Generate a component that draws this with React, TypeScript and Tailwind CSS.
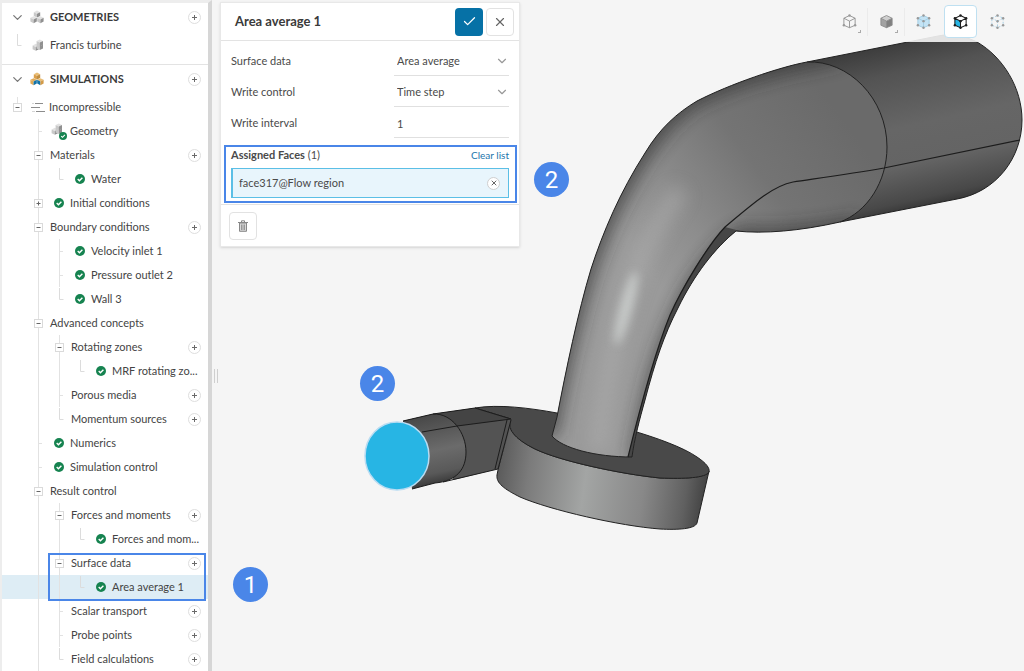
import React, { useState } from 'react';
import { Check, ChevronDown, X } from 'lucide-react';

type Guide = 'none' | 'line' | 'tee' | 'elbow' | 'minusLine' | 'plusLine' | 'minusTop';
type IconKind = 'check' | 'flow' | 'partDone';

interface TreeItem {
  label: string;
  guides: Guide[];
  icon?: IconKind;
  add?: boolean;
  selected?: boolean;
}

const itemsBefore: TreeItem[] = [
  { label: 'Incompressible', guides: ['minusTop'], icon: 'flow' },
  { label: 'Geometry', guides: ['none', 'tee'], icon: 'partDone' },
  { label: 'Materials', guides: ['none', 'minusLine'], add: true },
  { label: 'Water', guides: ['none', 'line', 'elbow'], icon: 'check' },
  { label: 'Initial conditions', guides: ['none', 'plusLine'], icon: 'check' },
  { label: 'Boundary conditions', guides: ['none', 'minusLine'], add: true },
  { label: 'Velocity inlet 1', guides: ['none', 'line', 'tee'], icon: 'check' },
  { label: 'Pressure outlet 2', guides: ['none', 'line', 'tee'], icon: 'check' },
  { label: 'Wall 3', guides: ['none', 'line', 'elbow'], icon: 'check' },
  { label: 'Advanced concepts', guides: ['none', 'minusLine'] },
  { label: 'Rotating zones', guides: ['none', 'line', 'minusLine'], add: true },
  { label: 'MRF rotating zo...', guides: ['none', 'line', 'line', 'elbow'], icon: 'check' },
  { label: 'Porous media', guides: ['none', 'line', 'tee'], add: true },
  { label: 'Momentum sources', guides: ['none', 'line', 'elbow'], add: true },
  { label: 'Numerics', guides: ['none', 'tee'], icon: 'check' },
  { label: 'Simulation control', guides: ['none', 'tee'], icon: 'check' },
  { label: 'Result control', guides: ['none', 'minusLine'] },
  { label: 'Forces and moments', guides: ['none', 'line', 'minusLine'], add: true },
  { label: 'Forces and mom...', guides: ['none', 'line', 'line', 'elbow'], icon: 'check' },
];

const itemsMarked: TreeItem[] = [
  { label: 'Surface data', guides: ['none', 'line', 'minusLine'], add: true },
  { label: 'Area average 1', guides: ['none', 'line', 'line', 'elbow'], icon: 'check', selected: true },
];

const itemsAfter: TreeItem[] = [
  { label: 'Scalar transport', guides: ['none', 'line', 'tee'], add: true },
  { label: 'Probe points', guides: ['none', 'line', 'tee'], add: true },
  { label: 'Field calculations', guides: ['none', 'line', 'elbow'], add: true },
];

const GuideCell: React.FC<{ kind: Guide }> = ({ kind }) => {
  const box = kind === 'minusLine' || kind === 'plusLine' || kind === 'minusTop';
  const full = kind === 'line' || kind === 'tee' || kind === 'minusLine' || kind === 'plusLine';
  return (
    <svg width="21" height="24" viewBox="0 0 21 24" className="shrink-0" fill="none" aria-hidden="true">
      {full && <path d="M10.5 0V24" stroke="#e2e2e2" />}
      {kind === 'minusTop' && <path d="M10.5 2V9" stroke="#e2e2e2" />}
      {kind === 'tee' && <path d="M10.5 12.5H14" stroke="#e2e2e2" />}
      {kind === 'elbow' && <path d="M10.5 1V12.5H14.5" stroke="#dcdcdc" />}
      {box && <rect x="6.5" y="8.5" width="8" height="8" fill="#fff" stroke="#dadada" />}
      {box && <path d="M8.5 12.5H12.5" stroke="#666" />}
      {kind === 'plusLine' && <path d="M10.5 10.5V14.5" stroke="#666" />}
    </svg>
  );
};

const CheckDot: React.FC = () => (
  <svg width="10" height="10" viewBox="0 0 10 10" className="shrink-0" aria-hidden="true">
    <circle cx="5" cy="5" r="5" fill="#168350" />
    <path d="M2.7 5.1 4.4 6.7 7.4 3.7" fill="none" stroke="#fff" strokeWidth="1.4" />
  </svg>
);

interface CubeTone {
  top: string;
  left: string;
  right: string;
}

const grey: CubeTone = { top: '#e2e2e2', left: '#c9c9c9', right: '#909090' };

const Cube: React.FC<{ x: number; y: number; tone: CubeTone }> = ({ x, y, tone }) => (
  <g transform={`translate(${x} ${y})`}>
    <path d="M0 -3.6 3.2 -2 0 -.4 -3.2 -2Z" fill={tone.top} />
    <path d="M-3.2 -2 0 -.4V3.4L-3.2 1.8Z" fill={tone.left} />
    <path d="M3.2 -2 0 -.4V3.4L3.2 1.8Z" fill={tone.right} />
  </g>
);

const CubesIcon: React.FC<{ colored?: boolean }> = ({ colored }) => (
  <svg width="14" height="14" viewBox="0 0 14 14" className="shrink-0" aria-hidden="true">
    <Cube x={7} y={4.2} tone={colored ? { top: '#e9bd75', left: '#d99f4c', right: '#c08d40' } : grey} />
    <Cube x={3.6} y={9.8} tone={colored ? { top: '#e0ac5d', left: '#e0a853', right: '#1172a8' } : grey} />
    <Cube x={10.4} y={9.8} tone={colored ? { top: '#e9bd75', left: '#1172a8', right: '#d39b48' } : grey} />
  </svg>
);

const PartIcon: React.FC<{ done?: boolean }> = ({ done }) => (
  <svg width={done ? 16 : 12} height={done ? 18 : 14} viewBox={done ? '0 0 16 18' : '0 0 12 14'} className="shrink-0" aria-hidden="true">
    <Cube x={3.8} y={9.4} tone={grey} />
    <Cube x={7.8} y={8.6} tone={grey} />
    <Cube x={7.8} y={5} tone={grey} />
    {done && (
      <g transform="translate(8 10)">
        <circle cx="4" cy="4" r="4" fill="#168350" />
        <path d="M2.2 4.1 3.5 5.3 5.9 2.9" fill="none" stroke="#fff" strokeWidth="1.1" />
      </g>
    )}
  </svg>
);

const FlowIcon: React.FC = () => (
  <svg width="14" height="12" viewBox="0 0 14 12" className="shrink-0" fill="none" stroke="#8c8c8c" aria-hidden="true">
    <path d="M4 2.5H12M0 6.5H9M5 10.5H14" />
    <path d="M1 2.5H3M1 10.5H4" stroke="#d5d5d5" />
  </svg>
);

const AddButton: React.FC<{ label: string }> = ({ label }) => (
  <button
    type="button"
    aria-label={`Add to ${label}`}
    className="flex h-[13px] w-[13px] shrink-0 items-center justify-center rounded-full border border-[#dedede] bg-white"
  >
    <svg width="5" height="5" viewBox="0 0 5 5" stroke="#6a6a6a" aria-hidden="true">
      <path d="M2.5 0V5M0 2.5H5" />
    </svg>
  </button>
);

const TreeRow: React.FC<{ item: TreeItem }> = ({ item }) => (
  <li className={`flex h-6 items-center pr-[7px] pl-[5px] ${item.selected ? 'bg-[#deedf5]' : ''}`}>
    {item.guides.map((kind, i) => (
      <GuideCell key={i} kind={kind} />
    ))}
    {item.icon && (
      <span className="flex w-5 shrink-0 items-center justify-center">
        {item.icon === 'check' && <CheckDot />}
        {item.icon === 'flow' && <FlowIcon />}
        {item.icon === 'partDone' && <PartIcon done />}
      </span>
    )}
    <a href="#" className="flex-1 pl-px whitespace-nowrap">
      {item.label}
    </a>
    {item.add && <AddButton label={item.label} />}
  </li>
);

const SectionHeader: React.FC<{ title: string; colored?: boolean }> = ({ title, colored }) => (
  <div className="flex h-7 items-center pr-[7px] pl-2">
    <button type="button" aria-label={`Collapse ${title}`} className="mr-[5px]">
      <ChevronDown size={15} strokeWidth={2} className="text-[#777]" />
    </button>
    <CubesIcon colored={colored} />
    <h2 className="flex-1 pl-1.5 font-bold text-[#3a3a3a]">{title}</h2>
    <AddButton label={title} />
  </div>
);

const Sidebar: React.FC = () => (
  <nav className="w-[212px] shrink-0 overflow-hidden border-t-[3px] border-r-4 border-l-2 border-t-[#ededed] border-r-[#d6d6d6] border-l-[#ededed] bg-white text-[11px] text-[#444]">
    <section className="border-b border-[#e3e3e3] pb-[5px]">
      <SectionHeader title="GEOMETRIES" />
      <div className="flex h-7 items-center pl-[5px]">
        <GuideCell kind="elbow" />
        <span className="flex w-5 justify-center">
          <PartIcon />
        </span>
        <a href="#" className="pl-0.5">Francis turbine</a>
      </div>
    </section>
    <section>
      <SectionHeader title="SIMULATIONS" colored />
      <ul className="pt-0.5">
        {itemsBefore.map((item) => (
          <TreeRow key={item.label} item={item} />
        ))}
      </ul>
      <div className="relative">
        <ul>
          {itemsMarked.map((item) => (
            <TreeRow key={item.label} item={item} />
          ))}
        </ul>
        <div className="pointer-events-none absolute top-0.5 right-0.5 -bottom-0.5 left-[46px] border-2 border-[#4a86e8]" />
      </div>
      <ul>
        {itemsAfter.map((item) => (
          <TreeRow key={item.label} item={item} />
        ))}
      </ul>
    </section>
  </nav>
);

const SelectRow: React.FC<{ id: string; label: string; options: string[] }> = ({ id, label, options }) => (
  <div className="flex h-[31px] items-center justify-between pt-0.5">
    <label htmlFor={id}>{label}</label>
    <div className="flex h-full w-[115px] items-center border-b border-[#e0e0e0]">
      <select id={id} className="min-w-0 flex-1 appearance-none bg-transparent pl-[3px] outline-none">
        {options.map((option) => (
          <option key={option}>{option}</option>
        ))}
      </select>
      <ChevronDown size={14} strokeWidth={2} className="text-[#999]" />
    </div>
  </div>
);

const SettingsPanel: React.FC = () => {
  const [interval, setInterval] = useState('1');

  return (
    <section className="w-[300px] border border-[#e8e8e8] bg-white text-[11px] text-[#4a4a4a] shadow-sm">
      <header className="flex h-[38px] items-center border-b border-[#e3e3e3] pr-[5px] pl-3.5">
        <h1 className="flex-1 text-[13px] font-bold text-[#3a3a3a]">Area average 1</h1>
        <button type="button" aria-label="Apply" className="flex h-7 w-7 items-center justify-center rounded-sm bg-[#0671a6] text-white">
          <Check size={15} strokeWidth={2} />
        </button>
        <button type="button" aria-label="Close" className="ml-[3px] flex h-7 w-7 items-center justify-center rounded-sm border border-[#e2e2e2] text-[#666]">
          <X size={14} strokeWidth={2} />
        </button>
      </header>
      <div className="px-2.5 pt-1">
        <SelectRow id="surface" label="Surface data" options={['Area average', 'Area integral']} />
        <SelectRow id="control" label="Write control" options={['Time step', 'Run time']} />
        <div className="flex h-[31px] items-center justify-between pt-0.5">
          <label htmlFor="interval">Write interval</label>
          <input
            id="interval"
            value={interval}
            onChange={(e) => setInterval(e.target.value)}
            className="h-full w-[115px] border-b border-[#e0e0e0] pl-[3px] outline-none"
          />
        </div>
      </div>
      <div className="mt-[7px] mr-0.5 ml-[3px] h-[58px] border-2 border-[#4a86e8] pr-1.5 pl-[5px]">
        <div className="flex h-[21px] items-center justify-between pb-1">
          <span>
            <span className="font-bold">Assigned Faces</span> (1)
          </span>
          <a href="#" className="text-[10px] text-[#1c75ab]">Clear list</a>
        </div>
        <div className="flex h-[30px] items-center justify-between border border-l-2 border-[#5bbfe6] bg-[#e8f5fc] pr-2 pl-1.5">
          <span>face317@Flow region</span>
          <button type="button" aria-label="Remove face" className="flex h-[13px] w-[13px] items-center justify-center rounded-full border border-[#cfcfcf] bg-white text-[#666]">
            <X size={8} strokeWidth={3} />
          </button>
        </div>
      </div>
      <footer className="mt-px border-t border-[#e3e3e3] px-2 pt-[7px] pb-1.5">
        <button type="button" aria-label="Delete" className="flex h-7 w-7 items-center justify-center rounded-sm border border-[#e2e2e2]">
          <svg width="10" height="12" viewBox="0 0 10 12" fill="none" stroke="#888" aria-hidden="true">
            <path d="M0 2.5H10M3.5 2V.8H6.5V2" />
            <path d="M1.5 3V11.3H8.5V3Z" fill="#d8d8d8" />
            <path d="M3.5 4.5V10M5 4.5V10M6.5 4.5V10" strokeWidth=".8" />
          </svg>
        </button>
      </footer>
    </section>
  );
};

type CubeMode = 'wire' | 'solid' | 'volume' | 'face' | 'node';

const ViewCube: React.FC<{ mode: CubeMode }> = ({ mode }) => {
  const stroke = mode === 'face' ? '#1c1c1c' : mode === 'volume' || mode === 'node' ? '#9ccbe3' : '#8a8a8a';
  const dot = mode === 'face' ? '#1c1c1c' : '#999';
  const dots = mode === 'wire' ? [[2, 12], [14, 12], [8, 1.6]] : [[2, 4.5], [2, 12], [14, 4.5], [14, 12], [8, 1.6], [8, 14.6], [8, 7.6]];
  return (
    <svg width="15" height="15" viewBox="0 0 16 16" fill="none" aria-hidden="true">
      {mode === 'volume' && <path d="M8 1.6 14 4.5V12L8 14.6 2 12V4.5Z" fill="#c4e3f4" />}
      {mode === 'face' && <path d="M2 4.5 8 7.6V14.6L2 12Z" fill="#27b5e4" />}
      {mode === 'solid' && (
        <>
          <path d="M8 1.6 14 4.5 8 7.6 2 4.5Z" fill="#cfcfcf" />
          <path d="M2 4.5 8 7.6V14.6L2 12Z" fill="#a2a2a2" />
          <path d="M14 4.5 8 7.6V14.6L14 12Z" fill="#808080" />
        </>
      )}
      <path
        d="M8 1.6 14 4.5V12L8 14.6 2 12V4.5ZM2 4.5 8 7.6 14 4.5M8 7.6V14.6"
        stroke={stroke}
        strokeWidth={mode === 'face' ? 1.1 : 0.9}
        strokeDasharray={mode === 'node' ? '2 1.5' : undefined}
      />
      {mode !== 'solid' && dots.map(([x, y]) => <circle key={`${x}-${y}`} cx={x} cy={y} r="1.3" fill={dot} />)}
    </svg>
  );
};

const tools: { mode: CubeMode; label: string; menu?: boolean }[] = [
  { mode: 'wire', label: 'View orientation', menu: true },
  { mode: 'solid', label: 'Render mode', menu: true },
  { mode: 'volume', label: 'Pick volumes' },
  { mode: 'face', label: 'Pick faces' },
  { mode: 'node', label: 'Pick nodes' },
];

const Toolbar: React.FC = () => (
  <div className="flex h-[42px] items-center gap-1 bg-[#f5f5f5]/90 pt-px pr-2.5 pl-1">
    {tools.map(({ mode, label, menu }) => (
      <button
        key={mode}
        type="button"
        aria-label={label}
        className={`relative flex h-[33px] w-[33px] items-center justify-center rounded-sm border ${mode === 'face' ? 'border-[#bfe0f1] bg-white' : 'border-transparent'}`}
      >
        <ViewCube mode={mode} />
        {menu && <span className="absolute right-1 bottom-1 h-[3px] w-[3px] border-r border-b border-[#aaa]" />}
        {menu && <span className="absolute -right-[3px] h-7 border-r border-[#ebebeb]" />}
      </button>
    ))}
  </div>
);

const pipe =
  'M807 62C780 67 730 84 697 101C677 113 660 128 645 153C620 192 603 232 591 269C578 312 566 370 557 417L552 436C562 448 595 457 632 457C634 440 640 418 645 400C655 362 664 335 678 308C694 275 715 248 736 231C764 234 800 231 840 222C867 212 887 182 887 147C887 98 848 60 807 62Z';
const discTop =
  'M475 408C498 404 530 408 557 413C590 418 670 438 697 457C706 463 710 468 709 472C706 478 684 479 660 478C620 474 560 461 535 449C513 438 507 428 511 419Z';
const discSide =
  'M510 419C507 428 513 438 535 449C560 461 620 474 660 478C684 479 706 478 709 471L697 523C695 529 678 530 660 529C620 526 550 510 520 497C504 489 496 483 497 475C499 463 506 443 510 419Z';

const TurbineModel: React.FC = () => (
  <svg viewBox="212 0 812 671" preserveAspectRatio="xMinYMin slice" className="absolute inset-0 h-full w-full" fill="none" role="img" aria-label="Francis turbine flow region">
    <defs>
      <linearGradient id="outlet" gradientUnits="userSpaceOnUse" x1="895" y1="42" x2="932" y2="208">
        <stop offset="0" stopColor="#3c3c3c" />
        <stop offset=".18" stopColor="#535353" />
        <stop offset=".5" stopColor="#666" />
        <stop offset=".72" stopColor="#646464" />
        <stop offset=".93" stopColor="#484848" />
        <stop offset="1" stopColor="#333" />
      </linearGradient>
      <linearGradient id="bend" gradientUnits="userSpaceOnUse" x1="840" y1="115" x2="640" y2="260">
        <stop offset="0" stopColor="#6a6a6a" />
        <stop offset=".4" stopColor="#747474" />
        <stop offset=".75" stopColor="#8d8d8d" />
        <stop offset="1" stopColor="#9a9a9a" />
      </linearGradient>
      <linearGradient id="side" gradientUnits="userSpaceOnUse" x1="497" y1="470" x2="706" y2="500">
        <stop offset="0" stopColor="#5a5a5a" />
        <stop offset=".15" stopColor="#7b7b7b" />
        <stop offset=".42" stopColor="#a3a5a4" />
        <stop offset=".7" stopColor="#888" />
        <stop offset=".9" stopColor="#606060" />
        <stop offset="1" stopColor="#414141" />
      </linearGradient>
      <linearGradient id="inlet" gradientUnits="userSpaceOnUse" x1="425" y1="415" x2="440" y2="487">
        <stop offset="0" stopColor="#474747" />
        <stop offset=".5" stopColor="#6b6b6b" />
        <stop offset=".8" stopColor="#595959" />
        <stop offset="1" stopColor="#303030" />
      </linearGradient>
      <clipPath id="pipeClip">
        <path d={pipe} />
      </clipPath>
      <filter id="soft" filterUnits="userSpaceOnUse" x="500" y="0" width="524" height="520">
        <feGaussianBlur stdDeviation="9" />
      </filter>
      <filter id="glow" filterUnits="userSpaceOnUse" x="560" y="220" width="140" height="180">
        <feGaussianBlur stdDeviation="5" />
      </filter>
    </defs>

    {/* draft tube outlet */}
    <path
      d="M807 62L938 36C952 33 965 36 977 42C1003 57 1022 88 1022 120C1022 158 996 192 957 199L840 222Z"
      fill="url(#outlet)"
      stroke="#222"
    />

    {/* spiral casing */}
    <path d={discSide} fill="url(#side)" stroke="#222" />
    <path d={discTop} fill="#494949" stroke="#222" />

    {/* inlet duct */}
    <path d="M440 413L475 408L511 419C508 440 502 455 498 469L453 480Z" fill="#535353" />
    <path d="M433 414L475 408L511 419L457 426L422 432L403 421Z" fill="#444" />
    <path d="M403 421L433 414C452 413 466 433 466 452C466 469 457 481 435 483L412 489Z" fill="url(#inlet)" />
    <path d="M403 421L433 414L475 408L511 419L457 426L422 432M433 414C452 413 466 433 466 452C466 469 457 481 435 483L412 489M443 482L498 469L511 420M495 469L507 420" stroke="#1c1c1c" />
    <ellipse cx="397" cy="456" rx="32" ry="34" fill="#27b5e4" stroke="#b9dcf2" strokeWidth="1.5" />

    {/* bent pipe */}
    <path d={pipe} fill="url(#bend)" />
    <g clipPath="url(#pipeClip)">
      <path d="M840 54C780 64 730 80 695 97C645 128 605 218 588 267C569 328 558 378 548 436" stroke="#303030" strokeWidth="14" opacity=".9" filter="url(#soft)" />
      <path d="M638 460C649 400 659 350 692 290C712 260 727 242 744 234C780 239 830 231 860 225" stroke="#303030" strokeWidth="12" opacity=".9" filter="url(#soft)" />
      <path d="M598 450C603 400 612 350 625 300C635 265 655 225 680 190" stroke="#b0b0b0" strokeWidth="16" opacity=".6" filter="url(#soft)" />
      <ellipse cx="626" cy="308" rx="6" ry="38" fill="#d2d6d4" opacity=".8" transform="rotate(15 626 308)" filter="url(#glow)" />
      <path d="M628 457C640 408 655 352 670 315C682 288 700 255 725 227L740 231C715 250 694 280 678 308C664 335 645 400 632 457Z" fill="#464646" />
    </g>
    <path d={pipe} stroke="#222" />
    <path d="M1020 140L884 168C850 174 820 178 793 182C772 186 750 206 725 227C708 245 682 288 670 315C655 352 640 408 628 457" stroke="#1c1c1c" strokeWidth="1.2" />
  </svg>
);

const Marker: React.FC<{ n: number; className: string }> = ({ n, className }) => (
  <span
    className={`absolute flex h-[35px] w-[35px] items-center justify-center rounded-full bg-[#4a86e8] font-[Roboto,sans-serif] text-2xl text-white ${className}`}
  >
    {n}
  </span>
);

const App: React.FC = () => (
  <div className="flex h-screen overflow-hidden bg-[#f5f5f5] font-[Lato,sans-serif]">
    <Sidebar />
    <main className="relative min-w-0 flex-1 overflow-hidden">
      <TurbineModel />
      <div className="relative flex items-start justify-between pl-2">
        <div className="pt-0.5">
          <SettingsPanel />
        </div>
        <Toolbar />
      </div>
      {/* splitter grip */}
      <div className="absolute top-[369px] left-0.5 h-[14px] w-1 border-x border-[#cfcfcf]" />
      <Marker n={2} className="top-[162px] left-[322px]" />
      <Marker n={2} className="top-[366px] left-[148px]" />
      <Marker n={1} className="top-[567px] left-[21px]" />
    </main>
  </div>
);

export default App;
